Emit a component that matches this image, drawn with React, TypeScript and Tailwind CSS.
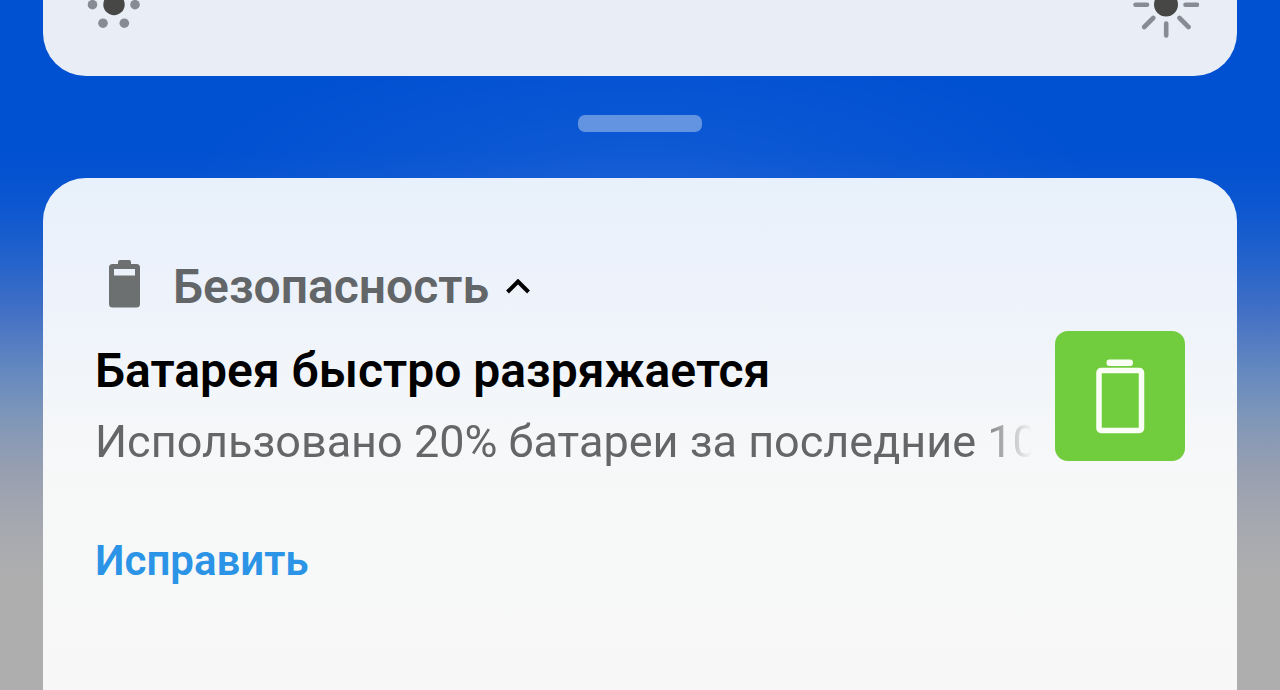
import React, { useState } from 'react';

function DimIcon() {
  return (
    <svg className="w-[66px] h-[66px]" viewBox="0 0 66 66" aria-hidden="true">
      <circle cx="33" cy="32.500" r="10.700" fill="#474846" />
      <g fill="#868b94">
        <circle cx="11.500" cy="32.700" r="4.800" />
        <circle cx="54" cy="32.700" r="4.800" />
        <circle cx="22" cy="51.200" r="4.800" />
        <circle cx="43.300" cy="51.200" r="4.800" />
        <circle cx="22" cy="14.200" r="4.800" />
        <circle cx="43.300" cy="14.200" r="4.800" />
      </g>
    </svg>
  );
}

function BrightIcon() {
  return (
    <svg className="w-[66px] h-[66px]" viewBox="0 0 66 66" aria-hidden="true">
      <circle cx="33" cy="32.500" r="12" fill="#474846" />
      <g stroke="#868b94" strokeWidth="4.600" strokeLinecap="round">
        <path d="M2.500 32.700h11.500M52.500 32.700H64M33.200 51.500v12M33.200 2v12" />
        <path d="M20.200 46l-9 9M46.500 46l9 9M20.200 19.500l-9-9M46.500 19.500l9-9" />
      </g>
    </svg>
  );
}

function SmallBatteryIcon() {
  return (
    <svg className="w-8 h-[54px] shrink-0" viewBox="0 0 32 54" aria-hidden="true">
      <path
        fill="#6c7070"
        fillRule="evenodd"
        d="M12 0h9a2 2 0 0 1 2 2v2H28.500a3.500 3.500 0 0 1 3.500 3.500v36.500A3.500 3.500 0 0 1 28.500 47.500H4.500a3.500 3.500 0 0 1-3.500-3.500v-36.500A3.500 3.500 0 0 1 4.500 4h5.500V2a2 2 0 0 1 2-2zM6 9v6.500h21V9z"
      />
    </svg>
  );
}

function BatteryTile() {
  return (
    <div className="w-[130px] h-[130px] shrink-0 rounded-[13px] bg-[#72cd3e]">
      <svg className="w-full h-full" viewBox="0 0 130 130" fill="none" aria-hidden="true">
        <rect x="51.500" y="28.500" width="26.500" height="6.500" rx="3" fill="#fafff5" />
        <rect x="44" y="39.500" width="42.500" height="60" rx="2" stroke="#fafff5" strokeWidth="5.500" />
      </svg>
    </div>
  );
}

function App() {
  const [isExpanded, setIsExpanded] = useState<boolean>(true);

  return (
    <div className="min-h-screen flex flex-col px-[43px] overflow-hidden font-['Roboto',sans-serif] bg-[radial-gradient(460px_150px_at_50%_185px,#ffffff12,#ffffff00),linear-gradient(180deg,#0050d2_0px,#0050d2_150px,#0c56d0_205px,#2363cb_260px,#416fc5_310px,#6488bf_370px,#8097b8_420px,#979fb0_470px,#a7a9b0_530px,#aeaeae_580px,#aeaeae_100%)]">
      {/* brightness panel, scrolled partly off the top */}
      <section className="-mt-7 flex justify-between px-[38px] pb-[38px] rounded-b-[43px] bg-[#e9eef6]">
        <DimIcon />
        <BrightIcon />
      </section>

      <div className="mt-[39px] mb-[46px] w-[124px] h-[17px] self-center rounded-[7px] bg-[#6394e2]" />

      <main className="flex-1 px-[52px] pt-[82px] pb-10 rounded-t-[43px] bg-[linear-gradient(180deg,#e8f1fb_0px,#edf2fb_110px,#f1f5fa_180px,#f5f7f9_250px,#f7f9f8_330px,#f7f7f7_100%)]">
        <button
          type="button"
          aria-expanded={isExpanded}
          onClick={() => setIsExpanded(!isExpanded)}
          className="ml-[13px] flex items-center"
        >
          <SmallBatteryIcon />
          <span className="ml-[33px] text-[48px] leading-[48px] font-semibold text-[#626668]">Безопасность</span>
          <svg className="ml-[17px] w-6 h-4 shrink-0" viewBox="0 0 24 16" fill="none" aria-hidden="true">
            <path d="M1.500 13L12 2.500L22.500 13" stroke="#000" strokeWidth="4" />
          </svg>
        </button>

        <div className="mt-[17px] flex items-start justify-between">
          <div className="min-w-0 flex-1 pt-3 mr-[23px]">
            <h1 className="text-[48px] leading-[56px] font-semibold text-black whitespace-nowrap">
              Батарея быстро разряжается
            </h1>
            <p className="mt-[15px] text-[45px] leading-[56px] text-[#646668] whitespace-nowrap overflow-hidden [mask-image:linear-gradient(to_left,transparent,black_56px)]">
              Использовано 20% батареи за последние 10
            </p>
          </div>
          <BatteryTile />
        </div>

        {isExpanded && (
          <button type="button" className="mt-[67px] text-[42px] leading-[48px] font-semibold text-[#2b94e6]">
            Исправить
          </button>
        )}
      </main>
    </div>
  );
}

export default App;
